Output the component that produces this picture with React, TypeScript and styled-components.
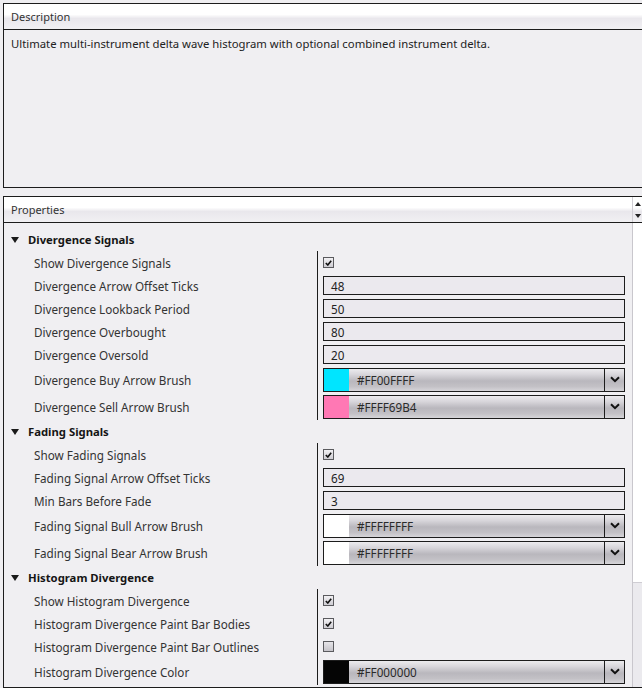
import React from 'react';
import styled, { createGlobalStyle } from 'styled-components';

const GlobalStyle = createGlobalStyle`
  html, body {
    margin: 0;
    padding: 0;
    background: #efeef1;
  }
  body {
    font-family: "Noto Sans", "DejaVu Sans", sans-serif;
    font-size: 11px;
    color: #1e1e1e;
  }
`;

const Page = styled.div`
  width: 642px;
  height: 688px;
  overflow: hidden;
  padding: 3px 0 0 3px;
  box-sizing: border-box;
  display: flex;
  flex-direction: column;
  gap: 8px;
`;

const Panel = styled.section<{ grow?: boolean }>`
  border: 1px solid #1c1c1c;
  border-right: none;
  background: #f0eff2;
  display: flex;
  flex-direction: column;
  ${({ grow }) => (grow ? 'flex: 1; min-height: 0;' : '')}
`;

const PanelHeader = styled.div`
  height: 26px;
  border-bottom: 1px solid #1c1c1c;
  background: linear-gradient(#ffffff 0%, #ffffff 42%, #e9e7ec 58%, #f1f0f3 100%);
  display: flex;
  align-items: center;
  padding-left: 7px;
  box-sizing: border-box;
  color: #333;
  position: relative;
`;

const HeaderScroll = styled.div`
  position: absolute;
  right: 0;
  top: 0;
  bottom: 0;
  width: 10px;
  border-left: 1px solid #d0ced4;
  display: flex;
  flex-direction: column;
  justify-content: space-between;
  align-items: center;
  padding: 5px 0 4px;
  box-sizing: border-box;
`;

const Arrow = styled.span<{ down?: boolean }>`
  width: 0;
  height: 0;
  border-left: 3px solid transparent;
  border-right: 3px solid transparent;
  ${({ down }) => (down ? 'border-top: 4px solid #222;' : 'border-bottom: 4px solid #222;')}
`;

const DescriptionBody = styled.div`
  height: 157px;
  padding: 6px 7px;
  box-sizing: border-box;
  font-size: 11.3px;
  color: #222;
`;

const PropsBody = styled.div`
  flex: 1;
  min-height: 0;
  display: grid;
  grid-template-columns: 1fr 10px;
`;

const List = styled.div`
  padding-top: 5px;
  padding-right: 7px;
`;

const ScrollTrack = styled.div`
  border-left: 1px solid #c9c7cd;
  background: #ebeaee;
`;

const ScrollThumb = styled.div`
  height: 360px;
  background: #ffffff;
  border-bottom: 1px solid #cfcdd3;
  box-sizing: border-box;
`;

const CategoryRow = styled.div`
  height: 23px;
  display: flex;
  align-items: center;
  gap: 9px;
  padding-left: 7px;
  font-size: 11.3px;
  font-weight: 700;
  color: #151515;
`;

const Caret = styled.span`
  width: 0;
  height: 0;
  border-left: 4px solid transparent;
  border-right: 4px solid transparent;
  border-top: 6px solid #1a1a1a;
`;

const Group = styled.div`
  display: grid;
  grid-template-columns: 313px 1fr;
`;

const Label = styled.div<{ tall?: boolean }>`
  height: ${({ tall }) => (tall ? 27 : 23)}px;
  display: flex;
  align-items: center;
  padding-left: 30px;
  font-size: 11.7px;
  color: #333;
`;

const ValueCell = styled.div<{ tall?: boolean }>`
  height: ${({ tall }) => (tall ? 27 : 23)}px;
  border-left: 1px solid #1c1c1c;
  padding-left: 5px;
  display: flex;
  align-items: center;
`;

const TextBox = styled.div`
  flex: 1;
  height: 19px;
  border: 1px solid #1c1c1c;
  box-sizing: border-box;
  background: #ebe9ee;
  display: flex;
  align-items: center;
  padding-left: 7px;
  font-size: 11.7px;
  color: #222;
`;

const Check = styled.span<{ on: boolean }>`
  width: 11px;
  height: 11px;
  box-sizing: border-box;
  border: 1px solid #5a5a5e;
  background: ${({ on }) => (on ? 'linear-gradient(#f2f1f4, #cfcdd3)' : 'linear-gradient(#e6e5e9, #c6c4ca)')};
  display: flex;
  align-items: center;
  justify-content: center;
`;

const ColorBox = styled.div`
  flex: 1;
  height: 24px;
  border: 1px solid #1c1c1c;
  box-sizing: border-box;
  display: flex;
  background: linear-gradient(#ecebee 0%, #d8d6db 25%, #b9b7bd 55%, #c3c1c6 80%, #d6d5d9 100%);
`;

const Swatch = styled.span<{ color: string }>`
  width: 25px;
  background: ${({ color }) => color};
`;

const ColorText = styled.span`
  flex: 1;
  padding-left: 8px;
  display: flex;
  align-items: center;
  font-size: 11.7px;
  color: #2a2a2a;
`;

const DropButton = styled.span`
  width: 19px;
  border-left: 1px solid #1c1c1c;
  display: flex;
  align-items: center;
  justify-content: center;
`;

type Prop =
  | { label: string; kind: 'check'; on: boolean }
  | { label: string; kind: 'text'; value: string }
  | { label: string; kind: 'color'; value: string; color: string };

const groups: { title: string; props: Prop[] }[] = [
  {
    title: 'Divergence Signals',
    props: [
      { label: 'Show Divergence Signals', kind: 'check', on: true },
      { label: 'Divergence Arrow Offset Ticks', kind: 'text', value: '48' },
      { label: 'Divergence Lookback Period', kind: 'text', value: '50' },
      { label: 'Divergence Overbought', kind: 'text', value: '80' },
      { label: 'Divergence Oversold', kind: 'text', value: '20' },
      { label: 'Divergence Buy Arrow Brush', kind: 'color', value: '#FF00FFFF', color: '#00e5ff' },
      { label: 'Divergence Sell Arrow Brush', kind: 'color', value: '#FFFF69B4', color: '#ff78b4' },
    ],
  },
  {
    title: 'Fading Signals',
    props: [
      { label: 'Show Fading Signals', kind: 'check', on: true },
      { label: 'Fading Signal Arrow Offset Ticks', kind: 'text', value: '69' },
      { label: 'Min Bars Before Fade', kind: 'text', value: '3' },
      { label: 'Fading Signal Bull Arrow Brush', kind: 'color', value: '#FFFFFFFF', color: '#ffffff' },
      { label: 'Fading Signal Bear Arrow Brush', kind: 'color', value: '#FFFFFFFF', color: '#ffffff' },
    ],
  },
  {
    title: 'Histogram Divergence',
    props: [
      { label: 'Show Histogram Divergence', kind: 'check', on: true },
      { label: 'Histogram Divergence Paint Bar Bodies', kind: 'check', on: true },
      { label: 'Histogram Divergence Paint Bar Outlines', kind: 'check', on: false },
      { label: 'Histogram Divergence Color', kind: 'color', value: '#FF000000', color: '#050505' },
    ],
  },
];

const Tick = () => (
  <svg width="7" height="6" viewBox="0 0 7 6">
    <path d="M0.8 3 L2.8 5 L6.2 0.8" fill="none" stroke="#111" strokeWidth="1.6" />
  </svg>
);

const Chevron = () => (
  <svg width="10" height="7" viewBox="0 0 10 7">
    <path d="M1 1.2 L5 5.2 L9 1.2" fill="none" stroke="#111" strokeWidth="2" />
  </svg>
);

const renderValue = (p: Prop) => {
  if (p.kind === 'check') {
    return <Check on={p.on}>{p.on && <Tick />}</Check>;
  }
  if (p.kind === 'text') {
    return <TextBox>{p.value}</TextBox>;
  }
  return (
    <ColorBox>
      <Swatch color={p.color} />
      <ColorText>{p.value}</ColorText>
      <DropButton>
        <Chevron />
      </DropButton>
    </ColorBox>
  );
};

const App: React.FC = () => (
  <>
    <GlobalStyle />
    <Page>
      <Panel>
        <PanelHeader>Description</PanelHeader>
        <DescriptionBody>
          Ultimate multi-instrument delta wave histogram with optional combined instrument delta.
        </DescriptionBody>
      </Panel>
      <Panel grow>
        <PanelHeader>
          Properties
          <HeaderScroll>
            <Arrow />
            <Arrow down />
          </HeaderScroll>
        </PanelHeader>
        <PropsBody>
          <List>
            {groups.map((g) => (
              <React.Fragment key={g.title}>
                <CategoryRow>
                  <Caret />
                  {g.title}
                </CategoryRow>
                <Group>
                  {g.props.map((p) => (
                    <React.Fragment key={p.label}>
                      <Label tall={p.kind === 'color'}>{p.label}</Label>
                      <ValueCell tall={p.kind === 'color'}>{renderValue(p)}</ValueCell>
                    </React.Fragment>
                  ))}
                </Group>
              </React.Fragment>
            ))}
          </List>
          <ScrollTrack>
            <ScrollThumb />
          </ScrollTrack>
        </PropsBody>
      </Panel>
    </Page>
  </>
);

export default App;
